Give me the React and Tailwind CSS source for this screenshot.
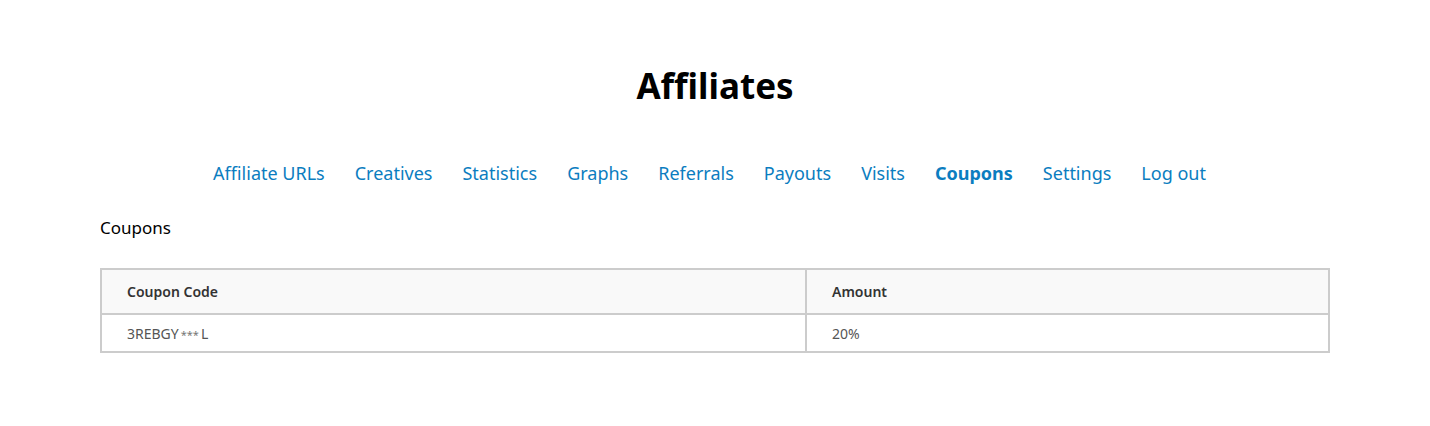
const navItems = [
  "Affiliate URLs",
  "Creatives",
  "Statistics",
  "Graphs",
  "Referrals",
  "Payouts",
  "Visits",
  "Coupons",
  "Settings",
  "Log out",
];

export default function App() {
  return (
    <div className="min-h-[426px] bg-white px-[100px] font-['Noto_Sans',sans-serif]">
      <h1 className="pt-[60px] text-center text-[35px] font-bold leading-[52px] text-black">
        Affiliates
      </h1>

      {/* Tabs */}
      <ul className="mt-[46px] flex justify-center gap-x-[30px] pr-[11px] text-[18px] leading-[30px] text-[#0b7dc0]">
        {navItems.map((item) => (
          <li key={item}>
            <a href="#" className={item === "Coupons" ? "font-bold" : ""}>
              {item}
            </a>
          </li>
        ))}
      </ul>

      <h4 className="mt-[27px] text-[17px] leading-[26px] text-black">Coupons</h4>

      <table className="mt-[27px] w-full border-collapse border-2 border-[#cccccc] text-left text-[14px]">
        <thead>
          <tr className="bg-[#f9f9f9]">
            <th className="h-[45px] w-[705px] border-2 border-[#cccccc] px-[25px] font-semibold text-[#333]">
              Coupon Code
            </th>
            <th className="h-[45px] border-2 border-[#cccccc] px-[25px] font-semibold text-[#333]">
              Amount
            </th>
          </tr>
        </thead>
        <tbody>
          <tr>
            <td className="h-[38px] border-2 border-[#cccccc] px-[25px] text-[#555]">
              3REBGY<span className="mx-[2px] text-[11px] text-[#777]">***</span>L
            </td>
            <td className="h-[38px] border-2 border-[#cccccc] px-[25px] text-[#555]">20%</td>
          </tr>
        </tbody>
      </table>
    </div>
  );
}
